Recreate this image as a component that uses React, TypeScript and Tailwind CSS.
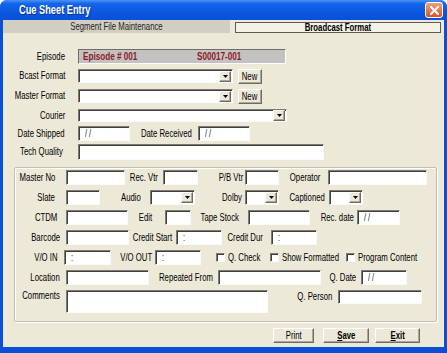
import clsx from 'clsx';

const sunken =
  'bg-white border border-t-[#7d7b72] border-l-[#7d7b72] border-b-[#fbfaf6] border-r-[#fbfaf6] shadow-[inset_1px_1px_0_#3f3f3f]';
const raised =
  'bg-[#ECE9D8] border border-t-white border-l-white border-b-[#6f6d63] border-r-[#6f6d63] shadow-[inset_-1px_-1px_0_#aca899]';

// the screenshot's font is a narrow one: squeeze Liberation Sans sideways
const T = ({ children, className }: { children: React.ReactNode; className?: string }) => (
  <span className={clsx('inline-block whitespace-nowrap scale-x-[0.74]', className)}>{children}</span>
);

const Label = ({ text, className }: { text: string; className: string }) => (
  <div className={clsx('flex items-center justify-end shrink-0 text-[10.5px] text-black', className)}>
    <T className="origin-right">{text}</T>
  </div>
);

const Field = ({ className, text }: { className: string; text?: string }) => (
  <div className={clsx(sunken, 'shrink-0 flex items-center pl-[6px] text-[10px] text-[#222]', className)}>
    {text && <T className="origin-left">{text}</T>}
  </div>
);

const Arrow = () => (
  <div className={clsx(raised, 'w-[12px] h-[11px] flex items-center justify-center')}>
    <svg width="5" height="3" viewBox="0 0 5 3">
      <path d="M0 0h5L2.5 3z" fill="#000" />
    </svg>
  </div>
);

const Combo = ({ className }: { className: string }) => (
  <div className={clsx(sunken, 'shrink-0 flex items-center justify-end pr-[1px]', className)}>
    <Arrow />
  </div>
);

const Check = ({ text, className }: { text: string; className: string }) => (
  <div className={clsx('flex items-center shrink-0', className)}>
    <div className={clsx(sunken, 'w-[9px] h-[9px] shrink-0')} />
    <T className="ml-[3px] origin-left text-[10.5px]">{text}</T>
  </div>
);

const Button = ({ children, className }: { children: React.ReactNode; className: string }) => (
  <div className={clsx(raised, 'h-[15px] flex items-center justify-center text-[10.5px]', className)}>
    <T className="origin-center">{children}</T>
  </div>
);

export default function App() {
  return (
    <div className="w-[447px] h-[353px] bg-[#0b4fd6] rounded-t-[7px] flex flex-col overflow-hidden font-['Liberation_Sans',Arial,sans-serif] text-black">
      {/* Title bar */}
      <div className="h-[20px] shrink-0 flex items-center pl-[19px] pr-[4px] bg-[linear-gradient(to_bottom,#4a94f8_0%,#1565ea_18%,#0b58e2_55%,#0a50d8_100%)]">
        <T className="origin-left text-white font-bold text-[12.5px] [text-shadow:1px_1px_0_#0a2f8a]">Cue Sheet Entry</T>
        <div className="ml-auto w-[18px] h-[16px] rounded-[3px] border border-white bg-[linear-gradient(to_bottom,#f0a07f,#d8542c)] flex items-center justify-center">
          <svg width="9" height="9" viewBox="0 0 9 9">
            <path d="M1 1l7 7M8 1l-7 7" stroke="#fff" strokeWidth="2" strokeLinecap="square" />
          </svg>
        </div>
      </div>

      {/* Body */}
      <div className="flex-1 mx-[3px] mb-[6px] bg-[#ECE9D8] flex flex-col">
        {/* Tabs */}
        <div className="h-[13px] flex shrink-0">
          <div className="w-[227px] bg-[#d2cfc2] flex items-center justify-center text-[10.5px] text-[#222]">
            <T>Segment File Maintenance</T>
          </div>
          <div className="ml-[5px] mt-[2px] w-[206px] h-[11px] bg-[#f4f2e6] border border-[#5c5b55] flex items-center justify-center text-[10.5px] font-bold">
            <T>Broadcast Format</T>
          </div>
        </div>

        {/* Upper form */}
        <div className="flex mt-[16px] h-[15px]">
          <Label text="Episode" className="w-[62px]" />
          <div className="ml-[13px] w-[208px] flex items-center text-[11px] font-bold text-[#8e1b2b] bg-[#c3c2bf] border border-t-[#6f6e6a] border-l-[#6f6e6a] border-b-white border-r-white">
            <div className="ml-[4px] w-[114px]">
              <T className="origin-left">Episode # 001</T>
            </div>
            <T className="origin-left">S00017-001</T>
          </div>
        </div>

        <div className="flex mt-[5px] h-[14px]">
          <Label text="Bcast Format" className="w-[62px]" />
          <Combo className="ml-[13px] w-[155px]" />
          <Button className="ml-[5px] w-[24px] h-[14px]">New</Button>
        </div>

        <div className="flex mt-[6px] h-[14px]">
          <Label text="Master Format" className="w-[62px]" />
          <Combo className="ml-[13px] w-[155px]" />
          <Button className="ml-[5px] w-[24px] h-[14px]">New</Button>
        </div>

        <div className="flex mt-[6px] h-[13px]">
          <Label text="Courier" className="w-[62px]" />
          <Combo className="ml-[13px] w-[209px]" />
        </div>

        <div className="flex mt-[4px] h-[15px]">
          <Label text="Date Shipped" className="w-[62px]" />
          <Field className="ml-[13px] w-[52px]" text="/ /" />
          <Label text="Date Received" className="w-[68px] pr-[6px]" />
          <Field className="w-[52px]" text="/ /" />
        </div>

        <div className="flex mt-[3px] h-[16px]">
          <Label text="Tech Quality" className="w-[62px] pr-[2px] items-start" />
          <Field className="ml-[13px] w-[246px]" />
        </div>

        {/* Group box */}
        <div className="ml-[11px] mt-[7px] w-[423px] border border-[#c3c0b0] shadow-[inset_1px_1px_0_#fff,1px_1px_0_#fff] rounded-[2px] pt-[2px] pb-[8px] flex flex-col gap-[5px]">
          <div className="flex h-[15px]">
            <Label text="Master No" className="w-[51px] pr-[11px]" />
            <Field className="w-[59px]" />
            <Label text="Rec. Vtr" className="w-[38px] pr-[5px]" />
            <Field className="w-[35px]" />
            <Label text="P/B Vtr" className="w-[47px] pr-[2px]" />
            <Field className="w-[34px]" />
            <Label text="Operator" className="w-[49px] pr-[8px]" />
            <Field className="w-[99px]" />
          </div>

          <div className="flex h-[15px]">
            <Label text="Slate" className="w-[51px] pr-[11px]" />
            <Field className="w-[34px]" />
            <Label text="Audio" className="w-[50px] pr-[9px]" />
            <Combo className="w-[45px]" />
            <Label text="Dolby" className="w-[50px] pr-[3px]" />
            <Combo className="w-[34px]" />
            <Label text="Captioned" className="w-[50px] pr-[4px]" />
            <Combo className="w-[34px]" />
          </div>

          <div className="flex h-[15px]">
            <Label text="CTDM" className="w-[51px] pr-[9px]" />
            <Field className="w-[62px]" />
            <Label text="Edit" className="w-[37px] pr-[13px]" />
            <Field className="w-[26px]" />
            <Label text="Tape Stock" className="w-[57px] pr-[9px]" />
            <Field className="w-[62px]" />
            <Label text="Rec. date" className="w-[47px] pr-[3px]" />
            <Field className="w-[43px]" text="/ /" />
          </div>

          <div className="flex h-[15px]">
            <Label text="Barcode" className="w-[51px] pr-[6px]" />
            <Field className="w-[63px]" />
            <Label text="Credit Start" className="w-[47px] pr-[4px]" />
            <Field className="w-[46px]" text=":" />
            <Label text="Credit Dur" className="w-[49px] pr-[8px]" />
            <Field className="w-[46px]" text=":" />
          </div>

          <div className="flex h-[15px]">
            <Label text="V/O IN" className="w-[49px] pr-[6px]" />
            <Field className="w-[47px]" text=":" />
            <Label text="V/O OUT" className="w-[44px] pr-[3px]" />
            <Field className="w-[46px]" text=":" />
            <Check text="Q. Check" className="ml-[15px] w-[54px]" />
            <Check text="Show Formatted" className="w-[76px]" />
            <Check text="Program Content" className="w-[75px]" />
          </div>

          <div className="flex h-[15px]">
            <Label text="Location" className="w-[51px] pr-[6px]" />
            <Field className="w-[83px]" />
            <Label text="Repeated From" className="w-[69px] pr-[5px]" />
            <Field className="w-[103px]" />
            <Label text="Q. Date" className="w-[40px] pr-[5px]" />
            <Field className="w-[46px]" text="/ /" />
          </div>

          <div className="flex h-[23px] items-start">
            <Label text="Comments" className="w-[51px] pr-[6px] h-[12px]" />
            <Field className="w-[202px] h-[23px]" />
            <Label text="Q. Person" className="w-[70px] pr-[6px] h-[14px]" />
            <Field className="w-[84px] h-[14px]" />
          </div>
        </div>

        {/* Buttons */}
        <div className="flex mt-[6px] ml-[270px]">
          <Button className="w-[41px]">Print</Button>
          <Button className="ml-[9px] w-[46px] font-bold">
            <span className="underline">S</span>ave
          </Button>
          <Button className="ml-[6px] w-[45px] font-bold">
            <span className="underline">E</span>xit
          </Button>
        </div>
      </div>
    </div>
  );
}
